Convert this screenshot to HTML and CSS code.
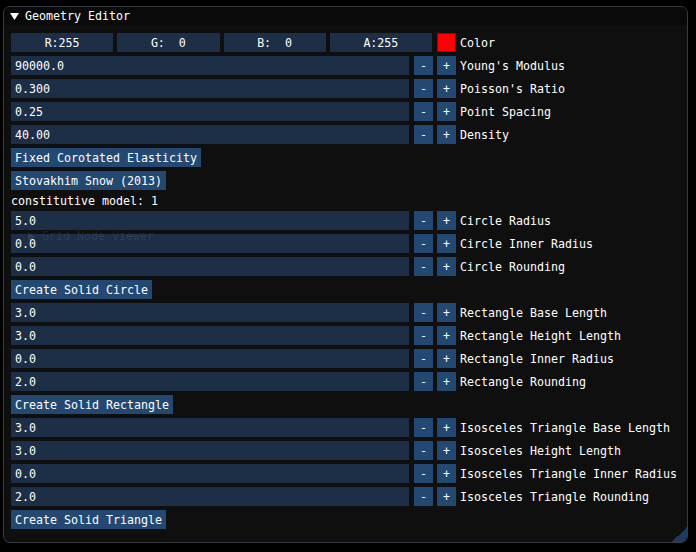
FILE: index.html
```html
<!DOCTYPE html>
<html>
<head>
<meta charset="utf-8">
<link rel="stylesheet" href="styles.css">
</head>
<body>
<div class="win">
  <div class="titlebar">
    <svg class="tri" width="9" height="8" viewBox="0 0 9 8"><polygon points="0,0 9,0 4.5,7" fill="#fff"/></svg>
    <span>Geometry Editor</span>
  </div>
  <div class="ghost">
    <svg class="gtri" width="7" height="9" viewBox="0 0 7 9"><polygon points="0,0 7,4.5 0,9" fill="currentColor"/></svg>
    <span>Grid Node Viewer</span>
  </div>
  <div class="content">
    <div class="row">
      <div class="comps">
        <div class="frame comp">R:255</div>
        <div class="frame comp">G:&nbsp;&nbsp;0</div>
        <div class="frame comp">B:&nbsp;&nbsp;0</div>
        <div class="frame comp">A:255</div>
      </div>
      <div class="swatch"></div>
      <span class="label">Color</span>
    </div>
    <div class="row"><div class="frame input">90000.0</div><div class="btn sq minus">-</div><div class="btn sq">+</div><span class="label">Young's Modulus</span></div>
    <div class="row"><div class="frame input">0.300</div><div class="btn sq minus">-</div><div class="btn sq">+</div><span class="label">Poisson's Ratio</span></div>
    <div class="row"><div class="frame input">0.25</div><div class="btn sq minus">-</div><div class="btn sq">+</div><span class="label">Point Spacing</span></div>
    <div class="row"><div class="frame input">40.00</div><div class="btn sq minus">-</div><div class="btn sq">+</div><span class="label">Density</span></div>
    <div class="row"><div class="btn">Fixed Corotated Elasticity</div></div>
    <div class="row"><div class="btn">Stovakhim Snow (2013)</div></div>
    <div class="text">constitutive model: 1</div>
    <div class="row"><div class="frame input">5.0</div><div class="btn sq minus">-</div><div class="btn sq">+</div><span class="label">Circle Radius</span></div>
    <div class="row"><div class="frame input">0.0</div><div class="btn sq minus">-</div><div class="btn sq">+</div><span class="label">Circle Inner Radius</span></div>
    <div class="row"><div class="frame input">0.0</div><div class="btn sq minus">-</div><div class="btn sq">+</div><span class="label">Circle Rounding</span></div>
    <div class="row"><div class="btn">Create Solid Circle</div></div>
    <div class="row"><div class="frame input">3.0</div><div class="btn sq minus">-</div><div class="btn sq">+</div><span class="label">Rectangle Base Length</span></div>
    <div class="row"><div class="frame input">3.0</div><div class="btn sq minus">-</div><div class="btn sq">+</div><span class="label">Rectangle Height Length</span></div>
    <div class="row"><div class="frame input">0.0</div><div class="btn sq minus">-</div><div class="btn sq">+</div><span class="label">Rectangle Inner Radius</span></div>
    <div class="row"><div class="frame input">2.0</div><div class="btn sq minus">-</div><div class="btn sq">+</div><span class="label">Rectangle Rounding</span></div>
    <div class="row"><div class="btn">Create Solid Rectangle</div></div>
    <div class="row"><div class="frame input">3.0</div><div class="btn sq minus">-</div><div class="btn sq">+</div><span class="label">Isosceles Triangle Base Length</span></div>
    <div class="row"><div class="frame input">3.0</div><div class="btn sq minus">-</div><div class="btn sq">+</div><span class="label">Isosceles Height Length</span></div>
    <div class="row"><div class="frame input">0.0</div><div class="btn sq minus">-</div><div class="btn sq">+</div><span class="label">Isosceles Triangle Inner Radius</span></div>
    <div class="row"><div class="frame input">2.0</div><div class="btn sq minus">-</div><div class="btn sq">+</div><span class="label">Isosceles Triangle Rounding</span></div>
    <div class="row"><div class="btn">Create Solid Triangle</div></div>
  </div>
  <div class="grip"></div>
</div>
</body>
</html>
```

FILE: styles.css
```css
html, body {
  margin: 0;
  background: #000;
}
body {
  width: 696px;
  height: 552px;
  overflow: hidden;
  padding: 6px 0 0 3px;
  box-sizing: border-box;
  font-family: "DejaVu Sans Mono", monospace;
  font-size: 11.63px;
  color: #fff;
}
.win {
  position: relative;
  width: 685px;
  height: 537px;
  box-sizing: border-box;
  border: 1px solid #3a3a43;
  border-radius: 7px;
  background: #0f0f0f;
  overflow: hidden;
}
.titlebar {
  height: 18px;
  background: #0a0a0a;
  display: flex;
  align-items: center;
  padding-left: 6px;
  line-height: 15px;
  padding-top: 1px;
  box-sizing: border-box;
}
.tri {
  display: block;
  margin-right: 6px;
}
.ghost {
  position: absolute;
  left: 24px;
  top: 223px;
  display: flex;
  align-items: center;
  color: rgba(255, 255, 255, 0.09);
  line-height: 13px;
  z-index: 2;
}
.gtri {
  display: block;
  margin-right: 7px;
}
.content {
  position: relative;
  z-index: 1;
  padding: 8px 7px;
  display: flex;
  flex-direction: column;
  gap: 4px;
}
.row {
  display: flex;
  align-items: flex-start;
  height: 19px;
}
.comps {
  display: flex;
  gap: 4px;
  width: 421px;
}
.frame {
  height: 19px;
  line-height: 21px;
  background: #1d2e47;
  white-space: pre;
}
.comp {
  flex: 1;
  text-align: center;
}
.swatch {
  width: 19px;
  height: 19px;
  box-sizing: border-box;
  margin-left: 5px;
  background: #ff0000;
  border: 1px solid #3a2a2e;
}
.input {
  width: 398px;
  padding-left: 4px;
  box-sizing: border-box;
}
.btn {
  height: 19px;
  line-height: 21px;
  background: #234872;
  padding: 0 4px;
  white-space: pre;
}
.sq {
  width: 19px;
  padding: 0;
  text-align: center;
  margin-left: 4px;
}
.sq.minus {
  margin-left: 5px;
}
.label {
  margin-left: 4px;
  height: 19px;
  line-height: 21px;
  white-space: pre;
}
.text {
  height: 13px;
  line-height: 15px;
}
.grip {
  position: absolute;
  right: 0;
  bottom: 0;
  width: 15px;
  height: 15px;
  background: linear-gradient(to top left, #1d3a5f 50%, transparent 50%);
}
```
